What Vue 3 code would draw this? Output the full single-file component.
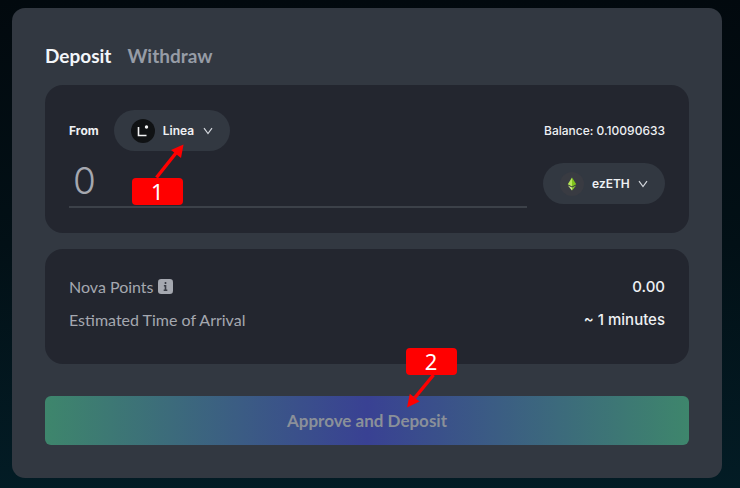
<script setup>
import { ref } from 'vue'

const tab = ref('Deposit')
const network = ref('Linea')
const token = ref('ezETH')
const amount = ref('')
</script>

<template>
  <main class="page">
    <form class="card" @submit.prevent>
      <nav class="tabs">
        <button
          v-for="name in ['Deposit', 'Withdraw']"
          :key="name"
          type="button"
          class="tab"
          :class="{ active: tab === name }"
          @click="tab = name"
        >{{ name }}</button>
      </nav>

      <section class="panel transfer">
        <div class="row">
          <div class="from">
            <label class="from-label" for="network">From</label>
            <div class="picker">
              <svg class="coin" viewBox="0 0 24 24" aria-hidden="true">
                <circle cx="12" cy="12" r="12" fill="#101214" />
                <path d="M7.5 8v8.5h8" fill="none" stroke="#f4f5f6" stroke-width="1.6" />
                <circle cx="15.5" cy="8" r="1.7" fill="#f4f5f6" />
              </svg>
              <select id="network" v-model="network" class="choice">
                <option>Linea</option>
              </select>
              <svg class="chevron" viewBox="0 0 10 8" aria-hidden="true">
                <path d="M1 1.2 5 6.6 9 1.2" fill="none" stroke="#d3d7dc" stroke-width="1.2" />
              </svg>
              <div class="callout first">
                <svg class="arrow" viewBox="0 0 32 36" aria-hidden="true">
                  <path d="M2.5 35.5 22 11" stroke="#ff0000" stroke-width="3.4" />
                  <path d="M29.5 2.5 27 16 17 8Z" fill="#ff0000" />
                </svg>
                <span class="badge">1</span>
              </div>
            </div>
          </div>
          <span class="balance">Balance: 0.10090633</span>
        </div>
        <div class="row amount-row">
          <input v-model="amount" class="amount" type="text" inputmode="decimal" placeholder="0" aria-label="Amount" />
          <div class="picker">
            <svg class="coin" viewBox="0 0 24 24" aria-hidden="true">
              <circle cx="12" cy="12" r="12" fill="#393b42" />
              <path d="M12 5.5 7.8 12.2 12 14.5Z" fill="#b5e655" />
              <path d="M12 5.5 16.2 12.2 12 14.5Z" fill="#7fc21d" />
              <path d="M7.9 13.4 12 18.5V15.6Z" fill="#d3f08c" />
              <path d="M16.1 13.4 12 18.5V15.6Z" fill="#8bcb2c" />
            </svg>
            <select v-model="token" class="choice" aria-label="Token">
              <option>ezETH</option>
            </select>
            <svg class="chevron" viewBox="0 0 10 8" aria-hidden="true">
              <path d="M1 1.2 5 6.6 9 1.2" fill="none" stroke="#d3d7dc" stroke-width="1.2" />
            </svg>
          </div>
        </div>
      </section>

      <dl class="panel details">
        <div class="row">
          <dt>
            Nova Points
            <svg class="info" viewBox="0 0 14 14" aria-hidden="true">
              <rect width="14" height="14" rx="3" fill="#a5a8b0" />
              <path d="M7 2.8v1.8M5.5 6.3H7V10.5M5.3 10.5h3.4" fill="none" stroke="#3a3d46" stroke-width="1.5" />
            </svg>
          </dt>
          <dd>0.00</dd>
        </div>
        <div class="row">
          <dt>Estimated Time of Arrival</dt>
          <dd>~ 1 minutes</dd>
        </div>
      </dl>

      <div class="action">
        <button class="submit" type="submit" disabled>Approve and Deposit</button>
        <div class="callout second">
          <span class="badge">2</span>
          <svg class="arrow" viewBox="0 0 32 36" aria-hidden="true">
            <path d="M27.5 0 9 22.500" stroke="#ff0000" stroke-width="3.4" />
            <path d="M1 32.5 3.800 18.800 13.500 26.500Z" fill="#ff0000" />
          </svg>
        </div>
      </div>
    </form>
  </main>
</template>

<style>
body {
  margin: 0;
  background: #020b11;
}
</style>

<style scoped>
* {
  box-sizing: border-box;
}

.page {
  min-height: 100vh;
  padding: 8px 18px 10px 12px;
  background: linear-gradient(#02090e, #021016 50%, #031c25);
  font-family: Lato, "Liberation Sans", sans-serif;
  color: #eef0f3;
}

.card {
  padding: 32px 33px 33px;
  border-radius: 13px;
  background: #323841;
}

.tabs {
  display: flex;
  gap: 16px;
  height: 45px;
}

.tab {
  height: 32px;
  padding: 0;
  border: 0;
  background: none;
  color: #969ca6;
  font: 700 19px/32px Lato, sans-serif;
}

.tab.active {
  color: #f3f6fa;
}

.panel {
  margin: 0 0 16px;
  padding: 25px 24px;
  border-radius: 18px;
  background: #23262f;
}

.row {
  display: flex;
  align-items: center;
  justify-content: space-between;
  gap: 16px;
}

.from {
  display: flex;
  align-items: center;
  gap: 15px;
}

.from-label,
.balance,
.choice {
  font: 600 12px/16px Inter, sans-serif;
}

.from-label {
  font-weight: 700;
}

.balance {
  font-weight: 500;
}

.picker {
  position: relative;
  display: flex;
  align-items: center;
  gap: 8px;
  height: 41px;
  padding: 0 17px;
  border-radius: 21px;
  background: #323841;
}

.coin {
  width: 24px;
  height: 24px;
}

.choice {
  padding: 0;
  border: 0;
  appearance: none;
  background: none;
  color: #eef0f3;
}

.chevron {
  width: 10px;
  height: 8px;
}

.amount-row {
  align-items: flex-start;
  margin-top: 12px;
}

.amount {
  flex: 1;
  min-width: 0;
  height: 45px;
  padding: 0 4px 8px;
  border: 0;
  border-bottom: 2px solid #3c4149;
  background: none;
  color: #a5a8b0;
  font: 300 37px/35px Inter, sans-serif;
}

.amount::placeholder {
  color: #a5a8b0;
  opacity: 1;
}

.details {
  padding: 24px 24px 31px;
  font-size: 16px;
  line-height: 27px;
}

.details .row + .row {
  margin-top: 6px;
}

dt {
  display: flex;
  align-items: center;
  gap: 4px;
  color: #a5a8b0;
}

dd {
  margin: 0;
  font-family: Inter, sans-serif;
  font-size: 15px;
  font-weight: 500;
}

.info {
  width: 15px;
  height: 15px;
}

.action {
  position: relative;
  margin-top: 32px;
}

.submit {
  display: block;
  width: 100%;
  height: 49px;
  border: 0;
  border-radius: 6px;
  background: linear-gradient(90deg, #3e866c, #394193 50%, #3e866c);
  color: #8a9099;
  font: 700 17px/24px Lato, sans-serif;
}

.callout {
  position: absolute;
  z-index: 1;
  display: flex;
  flex-direction: column;
  pointer-events: none;
}

.first {
  top: 32px;
  left: 18px;
}

.second {
  bottom: 34px;
  left: 56%;
}

.badge {
  width: 51px;
  height: 27px;
  border-radius: 4px;
  background: #ff0000;
  color: #ffffff;
  font: 400 22px/27px "Noto Sans", sans-serif;
  text-align: center;
}

.arrow {
  width: 32px;
  height: 36px;
}

.first .arrow {
  align-self: center;
  margin-left: 22px;
}
</style>
